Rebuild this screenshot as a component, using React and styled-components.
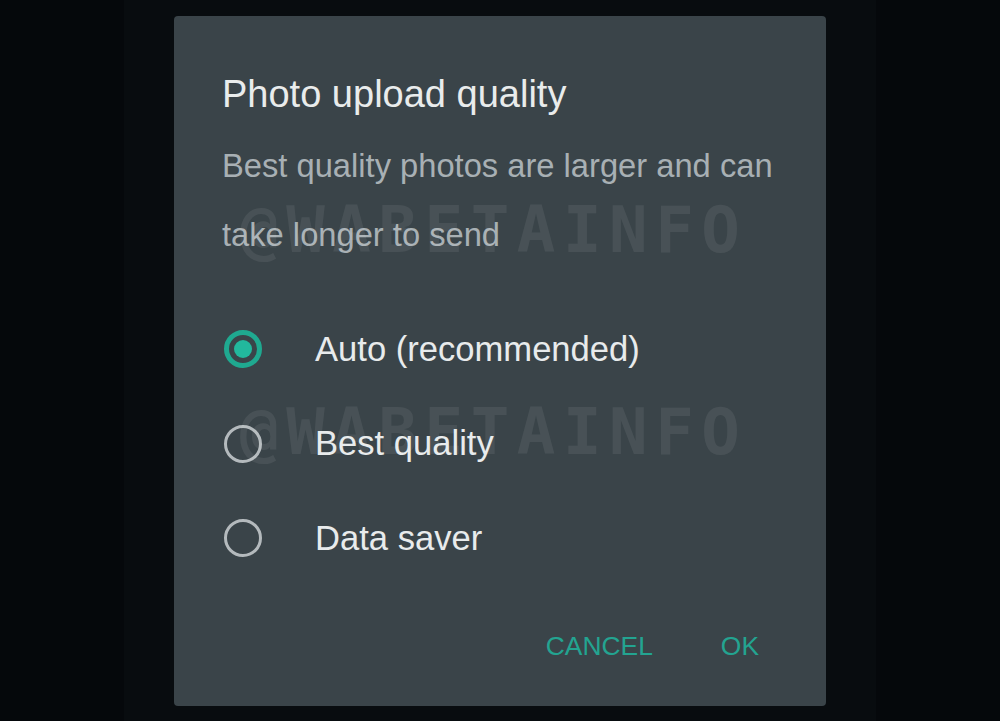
import React, { useState } from 'react'
import styled, { createGlobalStyle } from 'styled-components'

const GlobalStyle = createGlobalStyle`
 html, body {
  margin: 0;
  padding: 0;
  background: #05080b;
 }
 * {
  box-sizing: border-box;
 }
`

const Page = styled.div`
 width: 1000px;
 height: 721px;
 display: flex;
 justify-content: center;
 background: #05080b;
 overflow: hidden;
`

const Screen = styled.div`
 width: 752px;
 height: 100%;
 background: #080c0f;
 display: flex;
 justify-content: center;
 padding-top: 16px;
`

const Dialog = styled.div`
 position: relative;
 width: 652px;
 height: 690px;
 background: #3a4449;
 border-radius: 4px;
 padding: 59px 0 0 48px;
 display: flex;
 flex-direction: column;
 font-family: 'Liberation Sans', Arial, sans-serif;
`

const Title = styled.h2`
 margin: 0;
 font-size: 38px;
 line-height: 38px;
 font-weight: 400;
 color: #e9ecec;
`

const Description = styled.p`
 margin: 18px 0 0;
 font-size: 32.7px;
 line-height: 69px;
 color: #a8b0b4;
 white-space: nowrap;
`

const OptionList = styled.div`
 margin-top: 33px;
 display: flex;
 flex-direction: column;
`

const OptionRow = styled.label`
 height: 94.5px;
 display: flex;
 align-items: center;
 cursor: pointer;
`

const Radio = styled.span`
 width: 38px;
 height: 38px;
 margin-left: 2px;
 border-radius: 50%;
 border: ${(p) => (p.$checked ? '5px solid #1fa990' : '3.5px solid #b4babd')};
 display: flex;
 align-items: center;
 justify-content: center;
 flex-shrink: 0;
 &::after {
  content: '';
  width: 18px;
  height: 18px;
  border-radius: 50%;
  background: ${(p) => (p.$checked ? '#22b89d' : 'transparent')};
 }
`

const OptionText = styled.span`
 margin-left: 53px;
 font-size: 34.6px;
 line-height: 34.6px;
 color: #e8ebec;
`

const Actions = styled.div`
 margin-top: 47px;
 padding-right: 67px;
 display: flex;
 justify-content: flex-end;
 gap: 68px;
`

const ActionButton = styled.button`
 border: none;
 background: none;
 padding: 0;
 font-family: 'Liberation Sans', Arial, sans-serif;
 font-size: 26.4px;
 line-height: 26.4px;
 color: #23a491;
 cursor: pointer;
`

const Watermark = styled.div`
 position: absolute;
 left: 66px;
 top: ${(p) => p.$top}px;
 font-family: 'DejaVu Sans Mono', monospace;
 font-weight: 700;
 font-size: 64px;
 line-height: 64px;
 letter-spacing: 7.6px;
 color: rgba(255, 255, 255, 0.075);
 white-space: nowrap;
 pointer-events: none;
`

const options = ['Auto (recommended)', 'Best quality', 'Data saver']

const App = () => {
 const [selected, setSelected] = useState(0)
 return (
  <Page>
   <GlobalStyle />
   <Screen>
    <Dialog>
     <Title>Photo upload quality</Title>
     <Description>
      Best quality photos are larger and can
      <br />
      take longer to send
     </Description>
     <OptionList>
      {options.map((label, i) => (
       <OptionRow key={label} onClick={() => setSelected(i)}>
        <Radio $checked={selected === i} />
        <OptionText>{label}</OptionText>
       </OptionRow>
      ))}
     </OptionList>
     <Actions>
      <ActionButton>CANCEL</ActionButton>
      <ActionButton>OK</ActionButton>
     </Actions>
     <Watermark $top={182}>@WABETAINFO</Watermark>
     <Watermark $top={384}>@WABETAINFO</Watermark>
    </Dialog>
   </Screen>
  </Page>
 )
}

export default App
